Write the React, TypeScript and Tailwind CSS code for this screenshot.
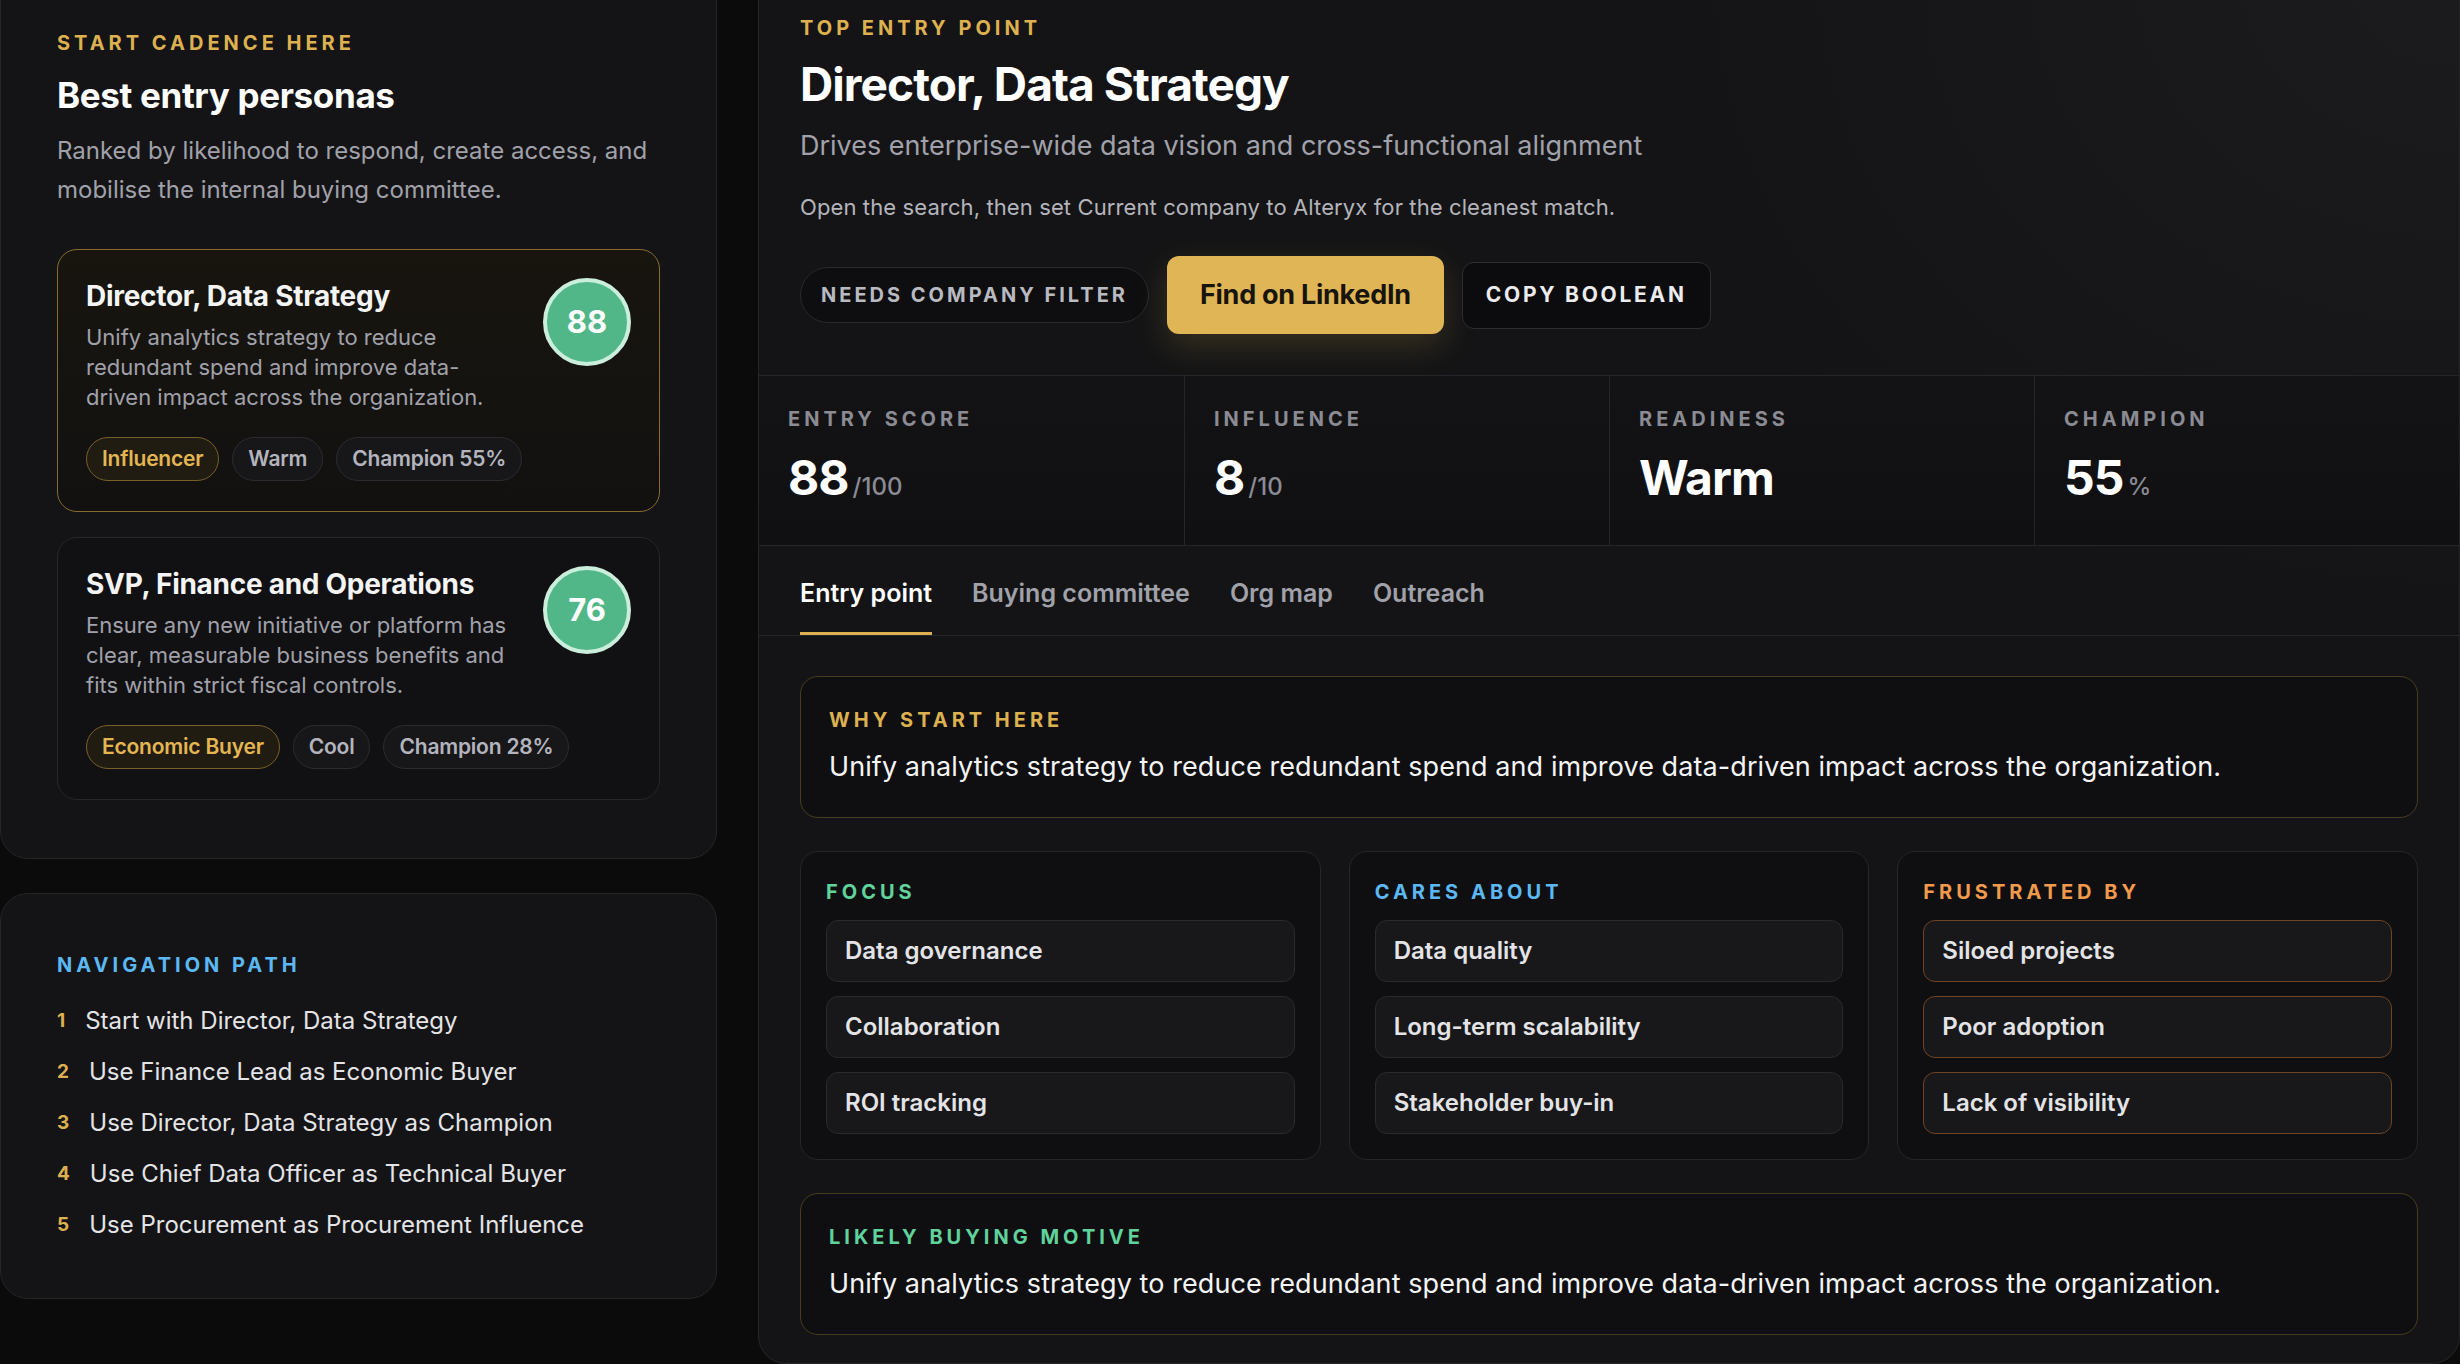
import React from "react";

type Chip = { label: string; tone: "gold" | "plain" };

const PERSONAS: {
  title: string;
  desc: string;
  score: number;
  active: boolean;
  chips: Chip[];
}[] = [
  {
    title: "Director, Data Strategy",
    desc: "Unify analytics strategy to reduce redundant spend and improve data-driven impact across the organization.",
    score: 88,
    active: true,
    chips: [
      { label: "Influencer", tone: "gold" },
      { label: "Warm", tone: "plain" },
      { label: "Champion 55%", tone: "plain" },
    ],
  },
  {
    title: "SVP, Finance and Operations",
    desc: "Ensure any new initiative or platform has clear, measurable business benefits and fits within strict fiscal controls.",
    score: 76,
    active: false,
    chips: [
      { label: "Economic Buyer", tone: "gold" },
      { label: "Cool", tone: "plain" },
      { label: "Champion 28%", tone: "plain" },
    ],
  },
];

const NAV_PATH = [
  "Start with Director, Data Strategy",
  "Use Finance Lead as Economic Buyer",
  "Use Director, Data Strategy as Champion",
  "Use Chief Data Officer as Technical Buyer",
  "Use Procurement as Procurement Influence",
];

const STATS = [
  { label: "ENTRY SCORE", value: "88", unit: "/100" },
  { label: "INFLUENCE", value: "8", unit: "/10" },
  { label: "READINESS", value: "Warm", unit: "" },
  { label: "CHAMPION", value: "55", unit: "%" },
];

const TABS = ["Entry point", "Buying committee", "Org map", "Outreach"];

const COLUMNS = [
  {
    title: "FOCUS",
    titleClass: "text-[#5fd39b]",
    itemClass: "border-[#2a2a2e]",
    items: ["Data governance", "Collaboration", "ROI tracking"],
  },
  {
    title: "CARES ABOUT",
    titleClass: "text-[#5cb8f3]",
    itemClass: "border-[#2a2a2e]",
    items: ["Data quality", "Long-term scalability", "Stakeholder buy-in"],
  },
  {
    title: "FRUSTRATED BY",
    titleClass: "text-[#f29a4c]",
    itemClass: "border-[#6e4425]",
    items: ["Siloed projects", "Poor adoption", "Lack of visibility"],
  },
];

const WHY =
  "Unify analytics strategy to reduce redundant spend and improve data-driven impact across the organization.";

function PersonaCard({ p }: { p: (typeof PERSONAS)[number] }) {
  return (
    <div
      className={`rounded-[20px] border pt-[28px] px-[28px] pb-[30px] ${
        p.active
          ? "border-[#8a6c2e] bg-[linear-gradient(180deg,#18150f_0%,#121110_100%)]"
          : "border-[#27272b] bg-[#111113]"
      }`}
    >
      <div className="flex items-start gap-6">
        <div className="flex-1">
          <div className="text-[28px] leading-[36px] font-bold text-[#f4f4f5] tracking-[-0.01em]">
            {p.title}
          </div>
          <div className="mt-[8px] text-[22px] leading-[30px] text-[#a1a1aa]">
            {p.desc}
          </div>
        </div>
        <div className="w-[88px] h-[88px] shrink-0 rounded-full bg-[#52b788] border-[4px] border-[#cbeedc] flex items-center justify-center text-[31px] font-bold text-white">
          {p.score}
        </div>
      </div>

      {/* chips */}
      <div className="mt-[25px] flex gap-[13px]">
        {p.chips.map((c) => (
          <span
            key={c.label}
            className={`h-[44px] px-[15px] rounded-full border flex items-center text-[21px] font-semibold tracking-[-0.01em] ${
              c.tone === "gold"
                ? "border-[#77602a] bg-[#211c12] text-[#e3b652]"
                : "border-[#2c2c30] bg-[#17171a] text-[#b4b4bc]"
            }`}
          >
            {c.label}
          </span>
        ))}
      </div>
    </div>
  );
}

export default function App() {
  return (
    <div className="w-[2460px] h-[1364px] overflow-hidden bg-[#0b0b0c] flex items-start gap-[41px] font-['Inter',sans-serif] antialiased">
      {/* =========================
          LEFT COLUMN
      ========================= */}
      <aside className="w-[717px] shrink-0 -mt-[28px] flex flex-col gap-[34px]">
        <section className="rounded-[28px] border border-[#262629] bg-[#141416] pt-[55px] px-[56px] pb-[58px]">
          <div className="text-[20px] leading-[30px] font-bold tracking-[0.2em] text-[#ddb14f]">
            START CADENCE HERE
          </div>
          <h2 className="mt-[16px] text-[35px] leading-[42px] font-bold text-white tracking-[-0.01em]">
            Best entry personas
          </h2>
          <p className="mt-[15px] text-[24px] leading-[39px] text-[#a1a1aa]">
            Ranked by likelihood to respond, create access, and mobilise the
            internal buying committee.
          </p>

          <div className="mt-[40px] flex flex-col gap-[25px]">
            {PERSONAS.map((p) => (
              <PersonaCard key={p.title} p={p} />
            ))}
          </div>
        </section>

        {/* NAVIGATION PATH */}
        <section className="rounded-[28px] border border-[#262629] bg-[#141416] pt-[56px] px-[56px] pb-[55px]">
          <div className="text-[20px] leading-[30px] font-bold tracking-[0.2em] text-[#5cb8f3]">
            NAVIGATION PATH
          </div>
          <ol className="mt-[23px] flex flex-col gap-[15px]">
            {NAV_PATH.map((n, i) => (
              <li key={n} className="flex items-center gap-[20px] leading-[36px]">
                <span className="text-[19px] font-bold text-[#ddb14f]">{i + 1}</span>
                <span className="text-[24px] text-[#e4e4e7]">{n}</span>
              </li>
            ))}
          </ol>
        </section>
      </aside>

      {/* =========================
          MAIN PANEL
      ========================= */}
      <main className="w-[1702px] shrink-0 h-[1392px] -mt-[28px] rounded-[28px] border border-[#262629] bg-[radial-gradient(ellipse_at_top_right,#1b1b1e_0%,#141416_35%)] bg-[#141416] overflow-hidden">
        {/* HEADER */}
        <div className="pt-[40px] px-[41px] pb-[41px]">
          <div className="text-[20px] leading-[30px] font-bold tracking-[0.2em] text-[#ddb14f]">
            TOP ENTRY POINT
          </div>
          <h1 className="mt-[13px] text-[46px] leading-[56px] font-bold text-white tracking-[-0.02em]">
            Director, Data Strategy
          </h1>
          <p className="mt-[16px] text-[27px] leading-[36px] text-[#a1a1aa]">
            Drives enterprise-wide data vision and cross-functional alignment
          </p>
          <p className="mt-[27px] text-[22px] leading-[32px] text-[#b4b4bb] tracking-[0.005em]">
            Open the search, then set Current company to Alteryx for the cleanest match.
          </p>

          <div className="mt-[33px] flex items-center gap-[18px]">
            <span className="h-[56px] px-[20px] rounded-full border border-[#2a2a2e] bg-[#0e0e10] flex items-center text-[20px] font-bold tracking-[0.15em] text-[#b9b9c0]">
              NEEDS COMPANY FILTER
            </span>
            <button className="h-[78px] px-[33px] rounded-[12px] bg-[#dfb555] text-[27px] font-bold text-[#17140c] tracking-[-0.01em] shadow-[0_12px_34px_rgba(223,181,85,0.18)]">
              Find on LinkedIn
            </button>
            <button className="h-[67px] px-[23px] rounded-[12px] border border-[#2e2e32] bg-[#0c0c0e] text-[21px] font-bold tracking-[0.13em] text-[#ececef]">
              COPY BOOLEAN
            </button>
          </div>
        </div>

        {/* STATS */}
        <div className="grid grid-cols-4 border-y border-[#26262a]">
          {STATS.map((s, i) => (
            <div
              key={s.label}
              className={`bg-[linear-gradient(180deg,#131315_0%,#101012_100%)] pt-[28px] pb-[30px] px-[29px] ${
                i > 0 ? "border-l border-[#26262a]" : ""
              }`}
            >
              <div className="text-[20px] leading-[30px] font-bold tracking-[0.2em] text-[#8b8b93]">
                {s.label}
              </div>
              <div className="mt-[16px] flex items-baseline leading-[56px]">
                <span className="text-[48px] font-bold text-white tracking-[-0.02em]">
                  {s.value}
                </span>
                {s.unit && (
                  <span className="ml-[4px] text-[24px] font-medium text-[#8b8b93]">
                    {s.unit}
                  </span>
                )}
              </div>
            </div>
          ))}
        </div>

        {/* TABS */}
        <div className="flex gap-[40px] px-[41px] border-b border-[#26262a]">
          {TABS.map((t, i) => (
            <div
              key={t}
              className={`pt-[29px] pb-[21px] border-b-[3px] text-[25px] leading-[36px] font-semibold ${
                i === 0
                  ? "border-[#ddb14f] text-white"
                  : "border-transparent text-[#a1a1aa]"
              }`}
            >
              {t}
            </div>
          ))}
        </div>

        {/* CONTENT */}
        <div className="px-[41px] pt-[40px] flex flex-col gap-[33px]">
          <div className="rounded-[18px] border border-[#4a3d1f] bg-[#0f0f11] pt-[28px] px-[28px] pb-[30px]">
            <div className="text-[20px] leading-[30px] font-bold tracking-[0.2em] text-[#ddb14f]">
              WHY START HERE
            </div>
            <p className="mt-[12px] text-[27px] leading-[40px] text-[#f4f4f5] tracking-[0.003em]">{WHY}</p>
          </div>

          <div className="grid grid-cols-3 gap-[28px]">
            {COLUMNS.map((c) => (
              <div
                key={c.title}
                className="rounded-[18px] border border-[#26262a] bg-[#0f0f11] p-[25px]"
              >
                <div
                  className={`text-[20px] leading-[30px] font-bold tracking-[0.2em] ${c.titleClass}`}
                >
                  {c.title}
                </div>
                <div className="mt-[13px] flex flex-col gap-[14px]">
                  {c.items.map((it) => (
                    <div
                      key={it}
                      className={`h-[62px] px-[18px] rounded-[12px] border bg-[#18181b] flex items-center text-[24px] font-semibold text-[#e4e4e7] ${c.itemClass}`}
                    >
                      {it}
                    </div>
                  ))}
                </div>
              </div>
            ))}
          </div>

          <div className="rounded-[18px] border border-[#4a3d1f] bg-[#0f0f11] pt-[28px] px-[28px] pb-[30px]">
            <div className="text-[20px] leading-[30px] font-bold tracking-[0.2em] text-[#5fd39b]">
              LIKELY BUYING MOTIVE
            </div>
            <p className="mt-[12px] text-[27px] leading-[40px] text-[#f4f4f5] tracking-[0.003em]">{WHY}</p>
          </div>
        </div>
      </main>
    </div>
  );
}
